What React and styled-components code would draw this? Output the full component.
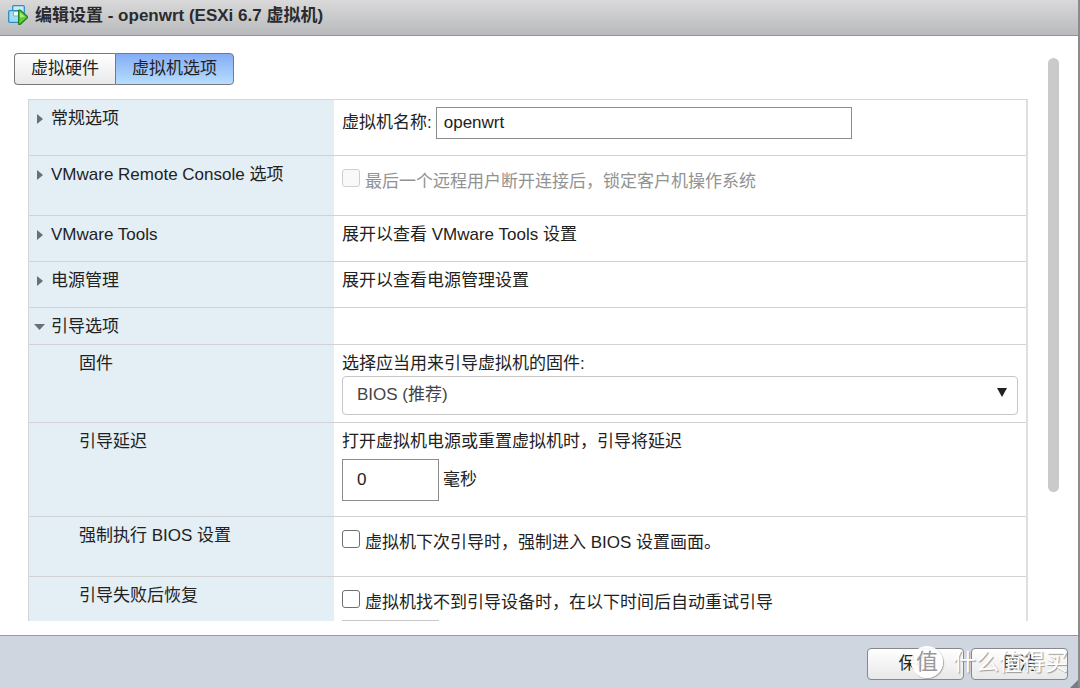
import React, { useState } from "react"
import styled, { createGlobalStyle } from "styled-components"

const App = () => {
  const [tab, setTab] = useState("options")
  const [bootOpen, setBootOpen] = useState(true)

  return (
    <Dialog>
      <GlobalStyle />
      <TitleBar>
        <VmIcon />
        <Title>编辑设置 - openwrt (ESXi 6.7 虚拟机)</Title>
      </TitleBar>

      <Body>
        <ScrollArea>
          <Tabs role="tablist">
            <Tab
              role="tab"
              aria-selected={tab === "hardware"}
              $active={tab === "hardware"}
              onClick={() => setTab("hardware")}
            >
              虚拟硬件
            </Tab>
            <Tab
              role="tab"
              aria-selected={tab === "options"}
              $active={tab === "options"}
              onClick={() => setTab("options")}
            >
              虚拟机选项
            </Tab>
          </Tabs>

          <Options>
            <Row>
              <GroupLabel text="常规选项" />
              <Value $bottom={16}>
                <Field>
                  <label htmlFor="vm-name">虚拟机名称:</label>
                  <NameInput id="vm-name" defaultValue="openwrt" />
                </Field>
              </Value>
            </Row>
            <Row>
              <GroupLabel text="VMware Remote Console 选项" />
              <Value $top={13} $bottom={20}>
                <CheckLabel $disabled>
                  <Checkbox disabled />
                  最后一个远程用户断开连接后，锁定客户机操作系统
                </CheckLabel>
              </Value>
            </Row>
            <Row>
              <GroupLabel text="VMware Tools" />
              <Value $bottom={14}>展开以查看 VMware Tools 设置</Value>
            </Row>
            <Row>
              <GroupLabel text="电源管理" />
              <Value $bottom={14}>展开以查看电源管理设置</Value>
            </Row>
            <Row>
              <GroupLabel
                text="引导选项"
                open={bootOpen}
                onClick={() => setBootOpen(!bootOpen)}
              />
              <Value />
            </Row>

            {bootOpen && (
              <>
                <Row>
                  <SubLabel>固件</SubLabel>
                  <Value $bottom={7}>
                    <label htmlFor="firmware">
                      选择应当用来引导虚拟机的固件:
                    </label>
                    <SelectWrapper>
                      <Select id="firmware" defaultValue="bios">
                        <option value="bios">BIOS (推荐)</option>
                        <option value="efi">EFI</option>
                      </Select>
                      <SelectArrow viewBox="0 0 10 9" aria-hidden="true">
                        <path d="M0 0h10L5 9z" fill="#222" />
                      </SelectArrow>
                    </SelectWrapper>
                  </Value>
                </Row>
                <Row>
                  <SubLabel>引导延迟</SubLabel>
                  <Value $bottom={15} $gap={5}>
                    <label htmlFor="delay">
                      打开虚拟机电源或重置虚拟机时，引导将延迟
                    </label>
                    <Field>
                      <NumberInput id="delay" defaultValue="0" />
                      <span>毫秒</span>
                    </Field>
                  </Value>
                </Row>
                <Row>
                  <SubLabel>强制执行 BIOS 设置</SubLabel>
                  <Value $top={13} $bottom={20}>
                    <CheckLabel>
                      <Checkbox />
                      虚拟机下次引导时，强制进入 BIOS 设置画面。
                    </CheckLabel>
                  </Value>
                </Row>
                <Row>
                  <SubLabel>引导失败后恢复</SubLabel>
                  <Value $top={13} $bottom={15} $gap={4}>
                    <CheckLabel>
                      <Checkbox />
                      虚拟机找不到引导设备时，在以下时间后自动重试引导
                    </CheckLabel>
                    <Field>
                      <NumberInput
                        aria-label="重试延迟"
                        disabled
                      />
                    </Field>
                  </Value>
                </Row>
              </>
            )}
          </Options>
        </ScrollArea>
        <ScrollTrack>
          <ScrollThumb />
        </ScrollTrack>
      </Body>

      <Footer>
        <Button>保存</Button>
        <Button>取消</Button>
        <ResizeGrip viewBox="0 0 8 8" aria-hidden="true">
          <path d="M8 0v8H0z" fill="#777b82" />
        </ResizeGrip>
        <Watermark>
          <WatermarkBadge>值</WatermarkBadge>
          <span>什么值得买</span>
        </Watermark>
      </Footer>
    </Dialog>
  )
}

const GroupLabel = ({ text, open, onClick }) => (
  <LabelCell>
    <Expander aria-expanded={!!open} onClick={onClick}>
      <Arrow viewBox="0 0 12 12" aria-hidden="true">
        <path d={open ? "M0 3h11L5.5 9z" : "M3 1v10l6-5z"} fill="#6b6f73" />
      </Arrow>
      {text}
    </Expander>
  </LabelCell>
)

const VmIcon = () => (
  <Icon viewBox="0 0 20 20" aria-hidden="true">
    <rect x="4.7" y=".7" width="11.6" height="10.6" rx="1" fill="#c9ecfa" stroke="#2c8fc4" strokeWidth="1.3" />
    <rect x=".7" y="5.7" width="10.6" height="11.6" rx="1" fill="#a5daf3" stroke="#2c8fc4" strokeWidth="1.3" />
    <path d="M5.5 6.5h5v4.5h-5z" fill="#ecf9ff" stroke="#6bb9df" />
    <path d="M10.7 5.2h1.6l7 6.3v1.2l-7 6.6h-1.6z" fill="#62cf3a" stroke="#23801c" strokeWidth="1.3" strokeLinejoin="round" />
    <path d="M12 7.4v5.2l5-.8z" fill="#a9ec80" />
  </Icon>
)

/* STYLE */
const GlobalStyle = createGlobalStyle`
  * {
    box-sizing: border-box;
  }
  body {
    margin: 0;
    color: #222;
    background: #fff;
  }
  body, button, input, select {
    font-family: "Liberation Sans", "Noto Sans CJK SC", sans-serif;
    font-size: 17px;
    line-height: 24px;
  }
`

const Dialog = styled.div`
  display: flex;
  flex-direction: column;
  height: 100vh;
  border-right: 2px solid #8b8b8b;
`

const TitleBar = styled.header`
  display: flex;
  align-items: center;
  gap: 7px;
  padding: 0 8px 5px;
  height: 36px;
  flex: none;
  background: linear-gradient(#d9d9da, #b9babd);
  border-bottom: 1px solid #929396;
`

const Icon = styled.svg`
  width: 20px;
  height: 20px;
`

const Title = styled.h1`
  margin: 0;
  padding-top: 2px;
  font-size: 17px;
  font-weight: 700;
  color: #2b2b2d;
`

const Body = styled.main`
  display: flex;
  flex: 1;
  min-height: 0;
  padding: 0 19px 14px 14px;
`

const ScrollArea = styled.div`
  flex: 1;
  padding-top: 17px;
  overflow-y: auto;
  scrollbar-width: none;
`

const ScrollTrack = styled.div`
  flex: none;
  width: 11px;
  margin-left: 20px;
  padding-top: 22px;
`

const ScrollThumb = styled.div`
  height: 77%;
  border-radius: 6px;
  background: #cacaca;
`

const Tabs = styled.div`
  display: flex;
`

const Tab = styled.button`
  height: 32px;
  padding: 0 16px;
  color: #222;
  border: 1px solid #77797d;
  background: ${({ $active }) =>
    $active
      ? "linear-gradient(#84acf5, #b7defe)"
      : "linear-gradient(#fff, #e9e9e9)"};

  &:first-child {
    border-right: 0;
    border-radius: 4px 0 0 4px;
  }
  &:last-child {
    border-radius: 0 4px 4px 0;
  }
`

const Options = styled.div`
  margin: 14px 0 0 14px;
  border: 1px solid #d3d5d7;
  border-right: 2px solid #dddfe0;
`

const Row = styled.section`
  display: grid;
  grid-template-columns: 305px 1fr;
  border-bottom: 1px solid #d0d2d4;
`

const LabelCell = styled.div`
  padding: 7px 5px 5px;
  background: #e3eef5;
`

const SubLabel = styled(LabelCell)`
  padding-left: 50px;
`

const Expander = styled.button`
  display: flex;
  align-items: center;
  gap: 5px;
  padding: 0;
  color: #222;
  border: 0;
  background: none;
`

const Arrow = styled.svg`
  width: 12px;
  height: 12px;
`

const Value = styled.div`
  display: flex;
  flex-direction: column;
  gap: ${({ $gap = 0 }) => $gap}px;
  padding: ${({ $top = 7, $bottom = 5 }) => `${$top}px 8px ${$bottom}px`};
`

const Field = styled.div`
  display: flex;
  align-items: center;
  gap: 4px;
`

const NameInput = styled.input`
  width: 416px;
  height: 32px;
  padding: 0 7px;
  color: #222;
  border: 1px solid #8c8c8c;
  background: #fff;
`

const NumberInput = styled.input`
  width: 97px;
  height: 42px;
  padding: 0 14px;
  color: #222;
  border: 1px solid #8c8c8c;
  background: #fff;

  &:disabled {
    border-color: #c8c8c8;
  }
`

const CheckLabel = styled.label`
  display: flex;
  align-items: flex-start;
  gap: 5px;
  line-height: 26px;
  color: ${({ $disabled }) => ($disabled ? "#929292" : "#222")};
`

const Checkbox = styled.input.attrs({ type: "checkbox" })`
  appearance: none;
  flex: none;
  width: 18px;
  height: 18px;
  margin: 0;
  border: 1px solid #6f6f6f;
  border-radius: 3px;
  background: #fff;

  &:checked {
    background: #2f7de1;
  }
  &:disabled {
    border-color: #cfcfcf;
    background: #f9f9f9;
  }
`

const SelectWrapper = styled.div`
  position: relative;
`

const Select = styled.select`
  appearance: none;
  display: block;
  width: 100%;
  height: 39px;
  padding: 0 14px 2px;
  color: #444;
  border: 1px solid #c6c6c6;
  border-radius: 4px;
  background: #fff;
`

const SelectArrow = styled.svg`
  position: absolute;
  top: 12px;
  right: 11px;
  width: 10px;
  height: 9px;
  pointer-events: none;
`

const Footer = styled.footer`
  position: relative;
  display: flex;
  flex: none;
  justify-content: flex-end;
  gap: 7px;
  padding: 12px 10px 8px;
  border-top: 1px solid #96999d;
  background: #d0d6df;
`

const Button = styled.button`
  width: 97px;
  height: 32px;
  padding: 0;
  color: #222;
  border: 1px solid #85888c;
  border-radius: 4px;
  background: linear-gradient(#fff, #e8e8e8);
`

const ResizeGrip = styled.svg`
  position: absolute;
  right: 0;
  bottom: 0;
  width: 8px;
  height: 8px;
`

const Watermark = styled.div`
  position: absolute;
  right: 10px;
  bottom: 10px;
  display: flex;
  align-items: center;
  gap: 10px;
  font-size: 23px;
  line-height: 32px;
  color: #fff;
  text-shadow: 1px 1px 1px #999;
  pointer-events: none;
`

const WatermarkBadge = styled.span`
  width: 32px;
  height: 32px;
  border-radius: 50%;
  text-align: center;
  font-size: 22px;
  color: #999;
  text-shadow: none;
  background: rgba(255, 255, 255, 0.92);
  box-shadow: 1px 1px 1px #aaa;
`

export default App
